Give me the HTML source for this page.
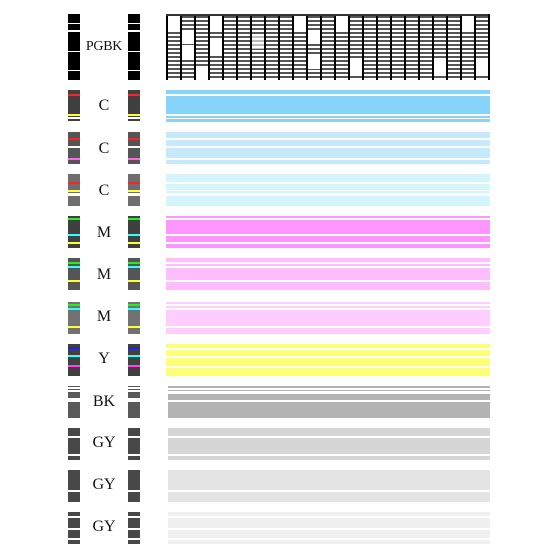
<!DOCTYPE html>
<html><head><meta charset="utf-8"><style>
html,body{margin:0;padding:0;background:#fff;width:560px;height:560px;overflow:hidden;position:relative}
div{position:absolute}
.l{left:68px;width:12px}
.r{left:128px;width:12px}
.s{left:166px;width:324px}
.g{left:168px;width:322px}
.t{left:74px;width:60px;text-align:center;font-family:"Liberation Serif","DejaVu Serif",serif;font-size:16px;line-height:16px;color:#111}
.w{background:#fff;width:12px;height:14px}
</style></head><body>

<!-- PGBK -->
<div class="l" style="top:14px;height:9px;background:#000"></div><div class="l" style="top:24px;height:6px;background:#000"></div><div class="l" style="top:32px;height:19px;background:#000"></div><div class="l" style="top:52px;height:18px;background:#000"></div><div class="l" style="top:71px;height:9px;background:#000"></div>
<div class="r" style="top:14px;height:9px;background:#000"></div><div class="r" style="top:24px;height:6px;background:#000"></div><div class="r" style="top:32px;height:19px;background:#000"></div><div class="r" style="top:52px;height:18px;background:#000"></div><div class="r" style="top:71px;height:9px;background:#000"></div>
<div class="t" style="left:74px;top:39px;font-size:14px;letter-spacing:-0.3px">PGBK</div>
<div style="left:166px;top:14px;width:324px;height:66px;background:repeating-linear-gradient(to bottom,#fff 0 2px,#555 2px 4px)"></div>
<div class="w" style="left:168px;top:16px"></div><div class="w" style="left:182px;top:30px"></div><div class="w" style="left:182px;top:45px"></div><div class="w" style="left:210px;top:16px"></div><div class="w" style="left:196px;top:66px"></div><div class="w" style="left:210px;top:40px"></div><div class="w" style="left:294px;top:16px"></div><div class="w" style="left:308px;top:30px"></div><div class="w" style="left:308px;top:55px"></div><div class="w" style="left:336px;top:16px"></div><div class="w" style="left:350px;top:60px"></div><div class="w" style="left:434px;top:60px"></div><div class="w" style="left:462px;top:16px"></div><div class="w" style="left:476px;top:60px"></div><div class="w" style="left:252px;top:35px;opacity:.6"></div>
<div style="left:166px;top:14px;width:324px;height:66px;background:repeating-linear-gradient(to right,#000 0 2px,transparent 2px 14px)"></div>
<div style="left:166px;top:14px;width:324px;height:2px;background:#333"></div>
<div style="left:488px;top:14px;width:2px;height:66px;background:#000"></div>

<!-- C1 -->
<div class="l" style="top:90px;height:27px;background:#404040"></div><div class="l" style="top:94px;height:2px;background:#f22"></div><div class="l" style="top:114px;height:2px;background:#ff3"></div><div class="l" style="top:119px;height:2px;background:#404040"></div>
<div class="r" style="top:90px;height:27px;background:#404040"></div><div class="r" style="top:94px;height:2px;background:#f22"></div><div class="r" style="top:114px;height:2px;background:#ff3"></div><div class="r" style="top:119px;height:2px;background:#404040"></div>
<div class="t" style="top:98px">C</div>
<div class="s" style="top:90px;height:4px;background:#87d4fa"></div><div class="s" style="top:96px;height:18px;background:#87d4fa"></div><div class="s" style="top:116px;height:2px;background:#87d4fa"></div><div class="s" style="top:119px;height:3px;background:#87d4fa"></div>

<!-- C2 -->
<div class="l" style="top:132px;height:14px;background:#555"></div><div class="l" style="top:138px;height:2px;background:#f22"></div><div class="l" style="top:148px;height:16px;background:#555"></div><div class="l" style="top:158px;height:2px;background:#f6e"></div>
<div class="r" style="top:132px;height:14px;background:#555"></div><div class="r" style="top:138px;height:2px;background:#f22"></div><div class="r" style="top:148px;height:16px;background:#555"></div><div class="r" style="top:158px;height:2px;background:#f6e"></div>
<div class="t" style="top:141px">C</div>
<div class="s" style="top:132px;height:6px;background:#c6e9fb"></div><div class="s" style="top:140px;height:6px;background:#c6e9fb"></div><div class="s" style="top:148px;height:10px;background:#c6e9fb"></div><div class="s" style="top:160px;height:4px;background:#c6e9fb"></div>

<!-- C3 -->
<div class="l" style="top:174px;height:19px;background:#6e6e6e"></div><div class="l" style="top:182px;height:2px;background:#f22"></div><div class="l" style="top:190px;height:2px;background:#ff3"></div><div class="l" style="top:196px;height:10px;background:#6e6e6e"></div>
<div class="r" style="top:174px;height:19px;background:#6e6e6e"></div><div class="r" style="top:182px;height:2px;background:#f22"></div><div class="r" style="top:190px;height:2px;background:#ff3"></div><div class="r" style="top:196px;height:10px;background:#6e6e6e"></div>
<div class="t" style="top:183px">C</div>
<div class="s" style="top:174px;height:8px;background:#d4f5fb"></div><div class="s" style="top:184px;height:6px;background:#d4f5fb"></div><div class="s" style="top:191px;height:2px;background:#d4f5fb"></div><div class="s" style="top:196px;height:10px;background:#d4f5fb"></div>

<!-- M1 -->
<div class="l" style="top:216px;height:32px;background:#404040"></div><div class="l" style="top:218px;height:2px;background:#2e2"></div><div class="l" style="top:234px;height:2px;background:#3ff"></div><div class="l" style="top:242px;height:2px;background:#ff3"></div>
<div class="r" style="top:216px;height:32px;background:#404040"></div><div class="r" style="top:218px;height:2px;background:#2e2"></div><div class="r" style="top:234px;height:2px;background:#3ff"></div><div class="r" style="top:242px;height:2px;background:#ff3"></div>
<div class="t" style="top:225px">M</div>
<div class="s" style="top:216px;height:2px;background:#ff96ff"></div><div class="s" style="top:220px;height:14px;background:#ff96ff"></div><div class="s" style="top:236px;height:6px;background:#ff96ff"></div><div class="s" style="top:244px;height:4px;background:#ff96ff"></div>

<!-- M2 -->
<div class="l" style="top:258px;height:32px;background:#555"></div><div class="l" style="top:262px;height:2px;background:#2e2"></div><div class="l" style="top:266px;height:2px;background:#3ff"></div><div class="l" style="top:280px;height:2px;background:#ff3"></div>
<div class="r" style="top:258px;height:32px;background:#555"></div><div class="r" style="top:262px;height:2px;background:#2e2"></div><div class="r" style="top:266px;height:2px;background:#3ff"></div><div class="r" style="top:280px;height:2px;background:#ff3"></div>
<div class="t" style="top:267px">M</div>
<div class="s" style="top:258px;height:4px;background:#ffbcff"></div><div class="s" style="top:264px;height:2px;background:#ffbcff"></div><div class="s" style="top:268px;height:12px;background:#ffbcff"></div><div class="s" style="top:282px;height:8px;background:#ffbcff"></div>

<!-- M3 -->
<div class="l" style="top:302px;height:32px;background:#727272"></div><div class="l" style="top:304px;height:2px;background:#2e2"></div><div class="l" style="top:308px;height:2px;background:#3ff"></div><div class="l" style="top:326px;height:2px;background:#ff3"></div>
<div class="r" style="top:302px;height:32px;background:#727272"></div><div class="r" style="top:304px;height:2px;background:#2e2"></div><div class="r" style="top:308px;height:2px;background:#3ff"></div><div class="r" style="top:326px;height:2px;background:#ff3"></div>
<div class="t" style="top:309px">M</div>
<div class="s" style="top:302px;height:2px;background:#ffcdff"></div><div class="s" style="top:306px;height:2px;background:#ffcdff"></div><div class="s" style="top:310px;height:16px;background:#ffcdff"></div><div class="s" style="top:328px;height:6px;background:#ffcdff"></div>

<!-- Y -->
<div class="l" style="top:344px;height:32px;background:#404040"></div><div class="l" style="top:347px;height:2px;background:#22e"></div><div class="l" style="top:355px;height:2px;background:#3ff"></div><div class="l" style="top:365px;height:2px;background:#f4e"></div>
<div class="r" style="top:344px;height:32px;background:#404040"></div><div class="r" style="top:347px;height:2px;background:#22e"></div><div class="r" style="top:355px;height:2px;background:#3ff"></div><div class="r" style="top:365px;height:2px;background:#f4e"></div>
<div class="t" style="top:351px">Y</div>
<div class="s" style="top:344px;height:4px;background:#ffff77"></div><div class="s" style="top:350px;height:6px;background:#ffff77"></div><div class="s" style="top:358px;height:8px;background:#ffff77"></div><div class="s" style="top:368px;height:8px;background:#ffff77"></div>

<!-- BK -->
<div class="l" style="top:386px;height:1px;background:#555"></div><div class="l" style="top:389px;height:1px;background:#555"></div><div class="l" style="top:392px;height:6px;background:#5a5a5a"></div><div class="l" style="top:402px;height:16px;background:#5a5a5a"></div>
<div class="r" style="top:386px;height:1px;background:#555"></div><div class="r" style="top:389px;height:1px;background:#555"></div><div class="r" style="top:392px;height:6px;background:#5a5a5a"></div><div class="r" style="top:402px;height:16px;background:#5a5a5a"></div>
<div class="t" style="top:394px">BK</div>
<div class="g" style="top:386px;height:2px;background:#b3b3b3"></div><div class="g" style="top:390px;height:1px;background:#b3b3b3"></div><div class="g" style="top:394px;height:6px;background:#b3b3b3"></div><div class="g" style="top:402px;height:16px;background:#b3b3b3"></div>

<!-- GY1 -->
<div class="l" style="top:428px;height:8px;background:#484848"></div><div class="l" style="top:438px;height:16px;background:#484848"></div><div class="l" style="top:456px;height:4px;background:#484848"></div>
<div class="r" style="top:428px;height:8px;background:#484848"></div><div class="r" style="top:438px;height:16px;background:#484848"></div><div class="r" style="top:456px;height:4px;background:#484848"></div>
<div class="t" style="top:435px">GY</div>
<div class="g" style="top:428px;height:8px;background:#d6d6d6"></div><div class="g" style="top:438px;height:16px;background:#d6d6d6"></div><div class="g" style="top:456px;height:4px;background:#d6d6d6"></div>

<!-- GY2 -->
<div class="l" style="top:470px;height:20px;background:#484848"></div><div class="l" style="top:492px;height:10px;background:#484848"></div>
<div class="r" style="top:470px;height:20px;background:#484848"></div><div class="r" style="top:492px;height:10px;background:#484848"></div>
<div class="t" style="top:477px">GY</div>
<div class="g" style="top:470px;height:20px;background:#e4e4e4"></div><div class="g" style="top:492px;height:10px;background:#e4e4e4"></div>

<!-- GY3 -->
<div class="l" style="top:512px;height:4px;background:#484848"></div><div class="l" style="top:518px;height:10px;background:#484848"></div><div class="l" style="top:530px;height:8px;background:#484848"></div><div class="l" style="top:540px;height:4px;background:#484848"></div>
<div class="r" style="top:512px;height:4px;background:#484848"></div><div class="r" style="top:518px;height:10px;background:#484848"></div><div class="r" style="top:530px;height:8px;background:#484848"></div><div class="r" style="top:540px;height:4px;background:#484848"></div>
<div class="t" style="top:519px">GY</div>
<div class="g" style="top:512px;height:4px;background:#f0f0f0"></div><div class="g" style="top:518px;height:10px;background:#f0f0f0"></div><div class="g" style="top:530px;height:8px;background:#f0f0f0"></div><div class="g" style="top:540px;height:4px;background:#f0f0f0"></div>

</body></html>
